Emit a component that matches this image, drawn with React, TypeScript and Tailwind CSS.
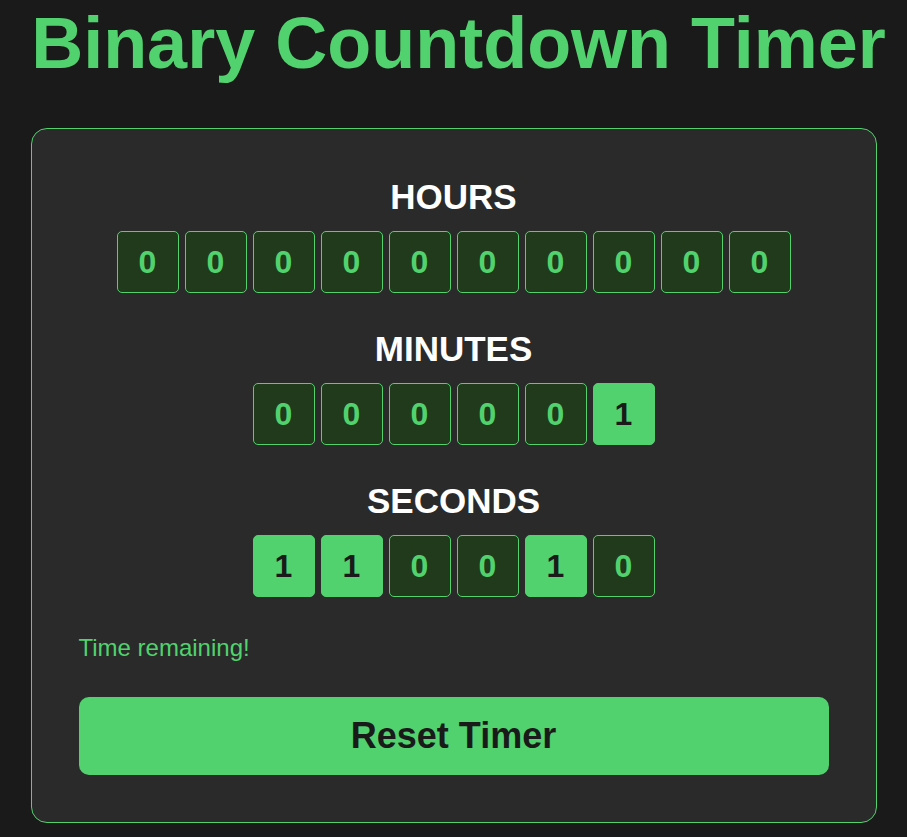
import { useState } from 'react'

const toBits = (value: number, width: number) =>
  value.toString(2).padStart(width, '0').split('')

function BitRow({ label, value, width }: { label: string; value: number; width: number }) {
  return (
    <div className="flex flex-col items-center">
      <h2 className="text-[35px] leading-[40px] font-bold text-white">{label}</h2>
      <div className="mt-[14px] flex gap-[6px]">
        {toBits(value, width).map((bit, i) =>
          bit === '1' ? (
            <div
              key={i}
              className="w-[62px] h-[62px] rounded-[5px] border border-[#51d26e] bg-[#51d26e] flex items-center justify-center text-[32px] font-bold text-[#1a1a1a]"
            >
              1
            </div>
          ) : (
            <div
              key={i}
              className="w-[62px] h-[62px] rounded-[5px] border border-[#51d26e] bg-[#213a1c] flex items-center justify-center text-[32px] font-bold text-[#51d26e]"
            >
              0
            </div>
          )
        )}
      </div>
    </div>
  )
}

export default function App() {
  const [total, setTotal] = useState(110)
  const hours = Math.floor(total / 3600)
  const minutes = Math.floor((total % 3600) / 60)
  const seconds = total % 60

  return (
    <div className="min-h-screen bg-[#1a1a1a] font-['Liberation_Sans',Arial,sans-serif]">
      <h1 className="pt-[4px] pl-[10px] text-center text-[72px] leading-[78px] font-bold text-[#51d26e]">
        Binary Countdown Timer
      </h1>

      <div className="mt-[46px] mx-auto w-[846px] rounded-2xl border border-[#51d26e] bg-[#2a2a2a] px-[47px] pt-[48px] pb-[47px]">
        <div className="flex flex-col gap-[36px]">
          <BitRow label="HOURS" value={hours} width={10} />
          <BitRow label="MINUTES" value={minutes} width={6} />
          <BitRow label="SECONDS" value={seconds} width={6} />
        </div>

        <p className="mt-[37px] text-2xl leading-[28px] text-[#51d26e]">
          {total > 0 ? 'Time remaining!' : "Time's up!"}
        </p>

        <button
          onClick={() => setTotal(110)}
          className="mt-[35px] w-full h-[78px] rounded-[10px] bg-[#51d26e] text-[36px] font-bold text-[#1a1a1a]"
        >
          Reset Timer
        </button>
      </div>
    </div>
  )
}
